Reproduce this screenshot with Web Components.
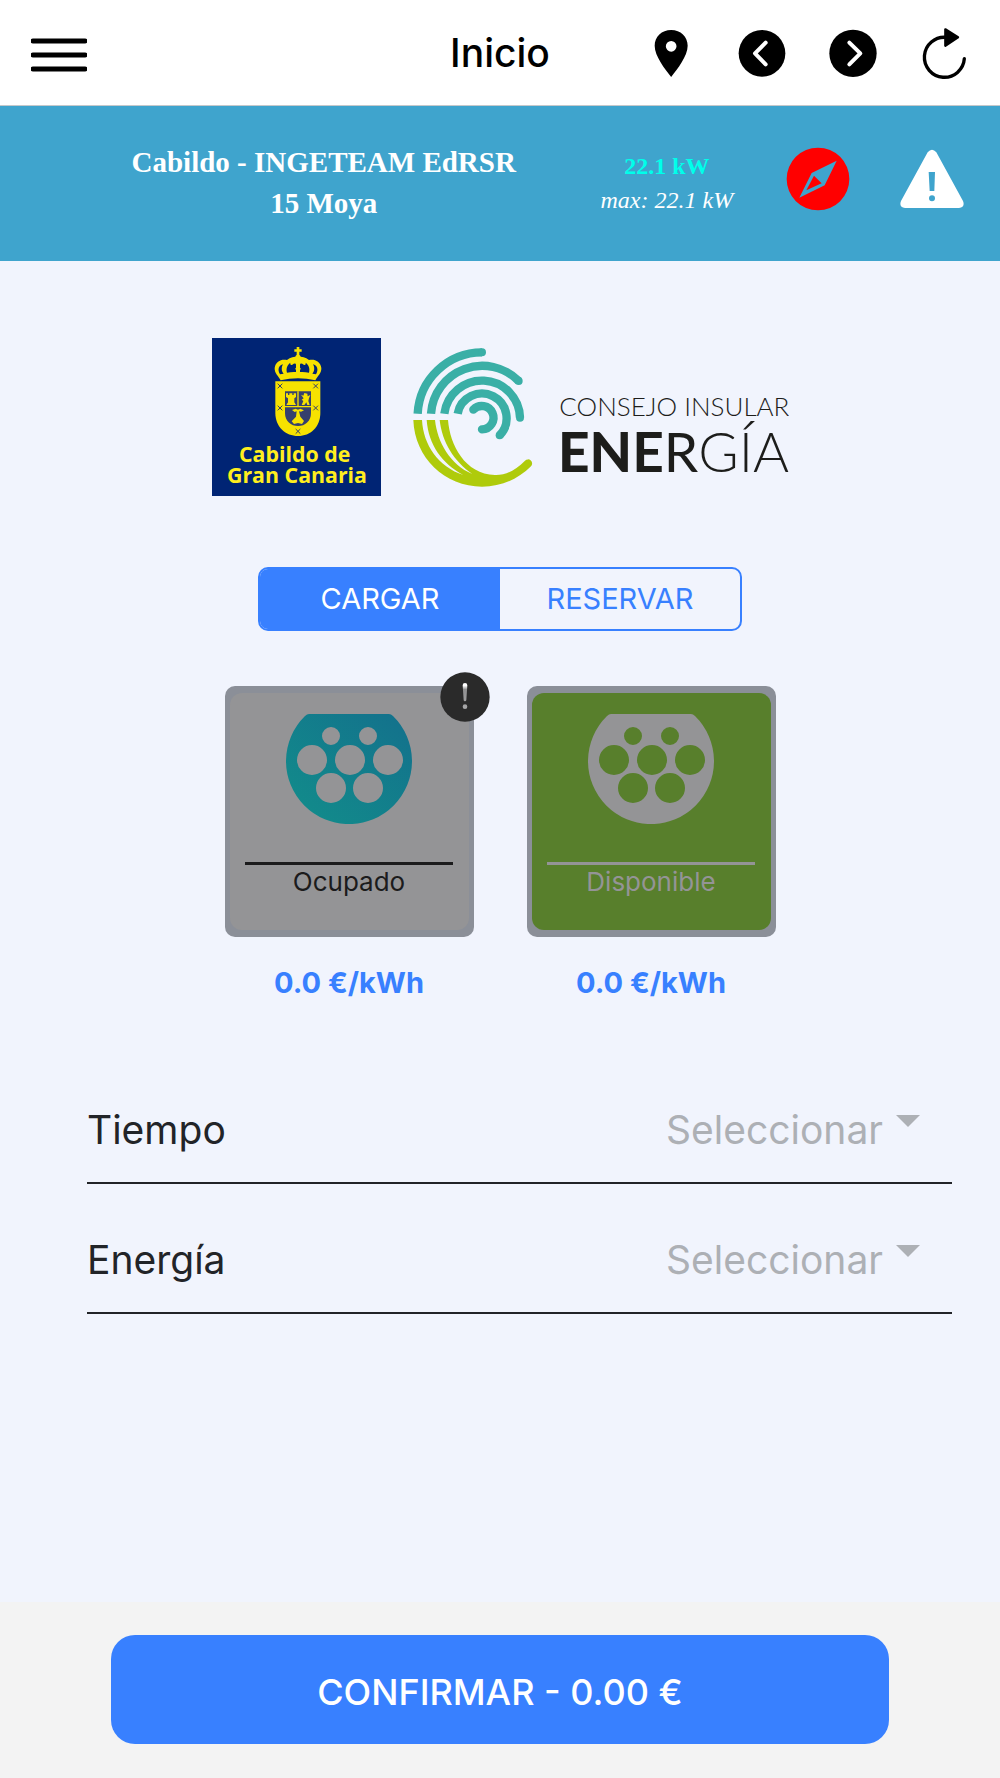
<!DOCTYPE html>
<html lang="es">
<head>
<meta charset="utf-8">
<meta name="viewport" content="width=device-width, initial-scale=1">
<title>Inicio</title>
<style>
  body {
    background: #f1f4fd;
    color: #222428;
    display: flex;
    flex-direction: column;
    font-family: Inter, "Liberation Sans", sans-serif;
    margin: 0;
    min-height: 100vh;
  }

  main {
    flex: 1;
  }

  .connectors {
    display: flex;
    gap: 53px;
    justify-content: center;
    margin: 55px 0 54px;
  }

  .fields {
    padding: 0 48px 0 87px;
  }
</style>
</head>
<body>
  <app-header>Inicio</app-header>
  <station-bar>
    <span slot="name">Cabildo - INGETEAM EdRSR<br>15 Moya</span>
    <span slot="power">22.1 kW</span>
    <span slot="max">max: 22.1 kW</span>
  </station-bar>
  <main>
    <partner-logos></partner-logos>
    <mode-segment></mode-segment>
    <div class="connectors">
      <connector-card status="busy" alert>
        Ocupado
        <span slot="price">0.0 €/kWh</span>
      </connector-card>
      <connector-card status="free">
        Disponible
        <span slot="price">0.0 €/kWh</span>
      </connector-card>
    </div>
    <div class="fields">
      <option-field label="Tiempo"></option-field>
      <option-field label="Energía"></option-field>
    </div>
  </main>
  <confirm-footer>CONFIRMAR - 0.00 €</confirm-footer>

<script>
const define = (name, content, setup) => {
  customElements.define(name, class extends HTMLElement {
    constructor() {
      super();
      this.attachShadow({ mode: "open" });
      this.shadowRoot.innerHTML = content;
    }

    connectedCallback() {
      if (setup) setup(this, this.shadowRoot);
    }
  });
};

define("app-header", `
  <style>
    :host {
      align-items: center;
      background: #fff;
      border-bottom: 1px solid #c4c8cb;
      color: #000;
      display: grid;
      grid-template-columns: 1fr auto 1fr;
      height: 105px;
    }

    h1 {
      font-size: 39px;
      font-weight: 500;
      line-height: 48px;
      margin: 0;
    }

    nav {
      display: flex;
      justify-content: flex-end;
      padding-right: 11px;
    }

    button {
      background: none;
      border: 0;
      color: inherit;
      padding: 0;
    }

    nav button {
      width: 91px;
    }

    .menu {
      justify-self: start;
      margin-left: 31px;
    }

    svg {
      display: block;
      height: 60px;
      margin: 0 auto;
    }
  </style>

  <button class="menu" aria-label="Menú">
    <svg width="56" viewBox="0 0 56 60" stroke="currentColor" stroke-width="5" stroke-linecap="round">
      <path d="M2 18h52M2 32h52M2 46h52"/>
    </svg>
  </button>
  <h1><slot></slot></h1>
  <nav>
    <button aria-label="Mapa">
      <svg width="60" viewBox="4 68 180 180">
        <path fill-rule="evenodd" d="M94.500 89C66 89 45 109 45 136C45 167 76 206 94.500 230C113 206 144 167 144 136C144 109 123 89 94.500 89ZM94.500 122a16 16 0 1 1 0 32a16 16 0 1 1 0-32Z"/>
      </svg>
    </button>
    <button aria-label="Anterior">
      <svg width="60" viewBox="276 68 180 180">
        <circle cx="366" cy="159" r="70"/>
        <path d="M377 127l-32 32l32 33" fill="none" stroke="#fff" stroke-width="12" stroke-linecap="round" stroke-linejoin="round"/>
      </svg>
    </button>
    <button aria-label="Siguiente">
      <svg width="60" viewBox="548 68 180 180">
        <circle cx="638" cy="159" r="71"/>
        <path d="M627 127l33 32l-33 33" fill="none" stroke="#fff" stroke-width="12" stroke-linecap="round" stroke-linejoin="round"/>
      </svg>
    </button>
    <button aria-label="Recargar">
      <svg width="60" viewBox="822 68 180 180">
        <path d="M973 175A60 60 0 1 1 918 111" fill="none" stroke="#000" stroke-width="10" stroke-linecap="round"/>
        <path d="M916 87L954 111L916 136Z" stroke="#000" stroke-width="7" stroke-linejoin="round"/>
      </svg>
    </button>
  </nav>
`);

define("station-bar", `
  <style>
    :host {
      align-items: center;
      background: #3fa4cd;
      color: #fff;
      display: grid;
      font-family: "Liberation Serif", serif;
      grid-template-columns: 508fr 179fr 123fr 105fr;
      height: 153px;
      padding: 0 16px 2px 70px;
      text-align: center;
    }

    .name {
      font-size: 29px;
      font-weight: bold;
      line-height: 41px;
    }

    .power {
      font-size: 24px;
      line-height: 34px;
    }

    strong {
      color: #00ffea;
      display: block;
    }

    button {
      background: none;
      border: 0;
      margin-bottom: 8px;
      padding: 0;
    }

    svg {
      display: block;
      margin: 0 auto;
    }
  </style>

  <div class="name"><slot name="name"></slot></div>
  <div class="power">
    <strong><slot name="power"></slot></strong>
    <em><slot name="max"></slot></em>
  </div>
  <button aria-label="Cómo llegar">
    <svg width="64" height="64" viewBox="440 440 192 192" fill="#f00">
      <path fill-rule="evenodd" d="M536 442a94 94 0 1 1 0 188a94 94 0 1 1 0-188ZM592 481L517 518L480 592L556 555Z"/>
      <path d="M524 526L547 549L501 570Z"/>
    </svg>
  </button>
  <button aria-label="Avisar de un problema">
    <svg width="64" height="60" viewBox="781 447 192 180" fill="#fff">
      <path fill-rule="evenodd" d="M864 457Q877 442 890 457L970 603Q977 622 958 624H796Q777 622 784 603ZM867 516L870 573H884L886 516ZM877 586a9 9 0 1 0 0 18a9 9 0 1 0 0-18Z"/>
    </svg>
  </button>
`);

define("partner-logos", `
  <style>
    :host {
      align-items: center;
      display: flex;
      gap: 31px;
      justify-content: center;
      padding: 77px 0 71px;
    }

    svg {
      display: block;
    }

    .council text {
      font-family: "Open Sans", "Noto Sans", sans-serif;
      font-size: 64px;
      font-weight: 700;
    }

    .energy text {
      font-family: Lato, "Open Sans", sans-serif;
    }
  </style>

  <svg class="council" width="169" height="158" viewBox="37 37 507 474" role="img" aria-label="Cabildo de Gran Canaria">
    <path fill="#002474" d="M37 37h507v474H37z"/>
    <g fill="#f7e200">
      <!-- crown -->
      <path d="M291 64h8v7h7v7h-7v14h-8V78h-7v-7h7z"/>
      <circle cx="295" cy="95" r="8"/>
      <path d="M243 164C236 150 224 143 225 127C228 106 246 99 262 103C272 94 284 93 295 93C306 93 318 94 328 103C344 99 362 106 365 127C366 143 354 150 347 164Q295 152 243 164Z"/>
      <!-- shield -->
      <path d="M227 167H362V262C362 304 332 331 295 331C258 331 227 304 227 262Z"/>
    </g>
    <g fill="#002474">
      <path d="M241 146C232 132 238 118 250 116C244 126 246 138 252 144Z"/>
      <path d="M349 146C358 132 352 118 340 116C346 126 344 138 338 144Z"/>
      <path d="M262 141C258 128 264 116 272 111C271 117 274 119 278 117C284 112 289 112 289 118V126Q284 129 289 133V139Q275 138 262 141Z"/>
      <path d="M328 141C332 128 326 116 318 111C319 117 316 119 312 117C306 112 301 112 301 118V126Q306 129 301 133V139Q315 138 328 141Z"/>
    </g>
    <path fill="#36406d" d="M256 197H334V262C334 287 316 301 295 301C274 301 256 287 256 262Z"/>
    <g fill="#f7e200">
      <path d="M293 197h4v45h-4zM256 241h78v4h-78z"/>
      <path d="M259 203h6v5h4v-5h9v5h4v-5h7v11l-5 4v12l5 8H260l5-8v-12l-6-4z"/>
      <path d="M304 207l7 3l3-8l9 2l1 8l8-4l-4 10l-2 8l4 12h-7l-3-8l-6 8h-8l5-12l-5-4l6-4z"/>
      <path d="M277 253l11-4l7 3l7-3l11 5l-9 4l-6-1l4 16l11 13l-6 9l-12-3l-12 3l-7-8l13-14l2-16l-6 2z"/>
    </g>
    <g stroke="#36406d" stroke-width="3" fill="none">
      <path d="M234 174l14 14m0-14l-14 14M341 174l14 14m0-14l-14 14M234 240l14 14m0-14l-14 14M341 240l14 14m0-14l-14 14M288 310l14 14m0-14l-14 14"/>
    </g>
    <g fill="#ffee1e" text-anchor="middle">
      <text x="285" y="410">Cabildo de</text>
      <text x="292" y="471">Gran Canaria</text>
    </g>
  </svg>

  <svg class="energy" width="377" height="140" viewBox="36 50 1131 420" role="img" aria-label="Consejo Insular Energía">
    <g fill="none" stroke="#3aafa6" stroke-width="25">
      <path d="M53 250A194 194 0 0 1 246 66"/>
      <path d="M93 250A154 154 0 0 1 356 152"/>
      <path d="M133 250A114 114 0 0 1 360 262"/>
      <path d="M173 250A74 74 0 1 1 299 315"/>
      <path stroke-linecap="round" d="M220 238A35 35 0 1 1 246 297"/>
    </g>
    <g fill="#3aafa6">
      <circle cx="246" cy="66" r="12"/>
      <circle cx="356" cy="152" r="12"/>
      <circle cx="360" cy="262" r="12"/>
      <circle cx="299" cy="315" r="12"/>
    </g>
    <path fill="#afcb0b" fill-rule="evenodd" d="M40 269C44 382 134 469 246 469C304 469 355 446 393 408A12 12 0 0 0 375 391C345 421 316 435 285 434C195 431 150 345 144 269ZM66 269C70 345 116 410 190 434C125 398 86 345 80 269ZM105 269C112 335 150 403 217 431C162 393 126 335 119 269Z"/>
    <g fill="#1d1d1b">
      <text x="478" y="256" font-size="78" font-weight="300">CONSEJO INSULAR</text>
      <text x="474" y="425" font-size="165"><tspan font-weight="900">EN</tspan><tspan font-weight="700">E</tspan><tspan font-weight="400">R</tspan><tspan font-weight="300">GÍA</tspan></text>
    </g>
  </svg>
`);

define("mode-segment", `
  <style>
    :host {
      border: 2px solid #3880ff;
      border-radius: 10px;
      box-sizing: border-box;
      display: flex;
      height: 64px;
      margin: 0 auto;
      max-width: 484px;
      overflow: hidden;
    }

    button {
      background: none;
      border: 0;
      color: #3880ff;
      flex: 1;
      font: 400 29px/34px Inter, "Liberation Sans", sans-serif;
      padding: 0;
    }

    button[aria-pressed="true"] {
      background: #3880ff;
      color: #fff;
    }
  </style>

  <button aria-pressed="true">CARGAR</button>
  <button aria-pressed="false">RESERVAR</button>
`, (host, root) => {
  const buttons = root.querySelectorAll("button");
  buttons.forEach((button) => {
    button.onclick = () => buttons.forEach((other) => other.setAttribute("aria-pressed", other === button));
  });
});

define("connector-card", `
  <style>
    :host {
      --ink: #1b1b1c;
      --fill: #949496;
      --plug: url(#teal);
      display: block;
      text-align: center;
      width: 249px;
    }

    :host([status="free"]) {
      --ink: #949496;
      --fill: #587f2c;
      --plug: #949496;
    }

    button {
      background: #8b8f98;
      border: 0;
      border-radius: 10px;
      display: block;
      font: 400 26px/32px Inter, "Liberation Sans", sans-serif;
      padding: 7px 5px;
      position: relative;
      width: 100%;
    }

    .face {
      align-items: center;
      background: var(--fill);
      border-radius: 12px;
      box-sizing: border-box;
      color: var(--ink);
      display: flex;
      flex-direction: column;
      height: 237px;
      padding: 21px 15px 0;
    }

    .label {
      border-top: 3px solid var(--ink);
      display: block;
      margin-top: 38px;
      padding-top: 1px;
      width: 208px;
    }

    .badge {
      display: none;
      position: absolute;
      right: -16px;
      top: -14px;
    }

    :host([alert]) .badge {
      display: block;
    }

    .price {
      color: #3880ff;
      font-size: 29px;
      font-weight: 700;
      line-height: 34px;
      margin-top: 29px;
    }
  </style>

  <button>
    <span class="face">
      <svg width="126" height="110" viewBox="0 0 126 110">
        <defs>
          <linearGradient id="teal" x1="0" y1="1" x2="1" y2="0">
            <stop offset="0.100" stop-color="#128b8b"/>
            <stop offset="0.900" stop-color="#13738c"/>
          </linearGradient>
        </defs>
        <path style="fill: var(--plug)" fill-rule="evenodd" d="M23 0H103Q105 0 107 2A63 63 0 1 1 19 2Q21 0 23 0Z
          M45 13a9 9 0 1 0 0 18a9 9 0 1 0 0-18ZM82 13a9 9 0 1 0 0 18a9 9 0 1 0 0-18Z
          M26 31a15 15 0 1 0 0 30a15 15 0 1 0 0-30ZM64 31a15 15 0 1 0 0 30a15 15 0 1 0 0-30ZM102 31a15 15 0 1 0 0 30a15 15 0 1 0 0-30Z
          M45 59a15 15 0 1 0 0 30a15 15 0 1 0 0-30ZM82 59a15 15 0 1 0 0 30a15 15 0 1 0 0-30Z"/>
      </svg>
      <span class="label"><slot></slot></span>
    </span>
    <svg class="badge" width="50" height="50" viewBox="0 0 150 150">
      <defs>
        <linearGradient id="shine" x1="0" y1="0" x2="0" y2="1">
          <stop offset="0.100" stop-color="#fff"/>
          <stop offset="0.250" stop-color="#8f8f90"/>
          <stop offset="1" stop-color="#a8a8a9"/>
        </linearGradient>
      </defs>
      <circle cx="75" cy="75" r="74" fill="#2a2a2a"/>
      <path fill="url(#shine)" d="M68 40a7 7 0 0 1 14 0L79 84a4 4 0 0 1-8 0ZM75 97a7 7 0 1 0 0 14a7 7 0 1 0 0-14Z"/>
    </svg>
  </button>
  <div class="price"><slot name="price"></slot></div>
`);

define("option-field", `
  <style>
    :host {
      align-items: center;
      border-bottom: 2px solid #222428;
      box-sizing: border-box;
      display: flex;
      font-size: 39px;
      height: 130px;
      line-height: 48px;
      padding: 24px 32px 0 0;
    }

    label {
      flex: 1;
    }

    select {
      appearance: none;
      background: none;
      border: 0;
      color: #adb0b5;
      font: inherit;
      margin-right: 13px;
      padding: 0;
    }

    svg {
      fill: #adb0b5;
      margin-bottom: 18px;
    }
  </style>

  <label for="value"></label>
  <select id="value"><option>Seleccionar</option></select>
  <svg width="24" height="12" viewBox="0 0 24 12"><path d="M0 0h24L12 12z"/></svg>
`, (host, root) => {
  root.querySelector("label").textContent = host.getAttribute("label");
});

define("confirm-footer", `
  <style>
    :host {
      background: #f3f3f3;
      display: block;
      padding: 33px 111px 34px;
    }

    button {
      background: #3880ff;
      border: 0;
      border-radius: 24px;
      color: #fff;
      display: block;
      font: 500 36px/48px Inter, "Liberation Sans", sans-serif;
      height: 109px;
      padding: 4px 0 0;
      width: 100%;
    }
  </style>

  <button><slot></slot></button>
`);
</script>
</body>
</html>
